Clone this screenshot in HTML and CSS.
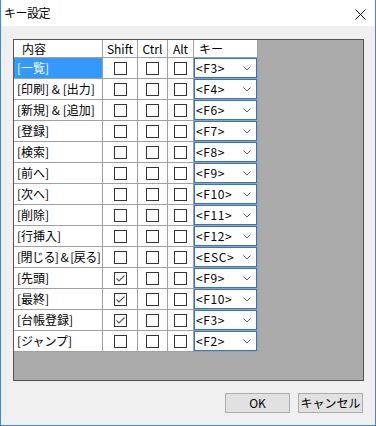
FILE: index.html
```html
<!DOCTYPE html>
<html lang="ja">
<head>
<meta charset="utf-8">
<title>キー設定</title>
<link rel="stylesheet" href="styles.css">
</head>
<body>
<div class="window">
  <div class="titlebar">
    <span class="title">キー設定</span>
    <svg class="close" width="11" height="11" viewBox="0 0 11 11"><path d="M0.5 0.5 L10.5 10.5 M10.5 0.5 L0.5 10.5" stroke="#111" stroke-width="1" fill="none"/></svg>
  </div>
  <div class="content">
    <div class="gridbox">
      <div class="table">
        <div class="cell head name-head">内容</div>
        <div class="cell head center">Shift</div>
        <div class="cell head center">Ctrl</div>
        <div class="cell head center">Alt</div>
        <div class="cell head key-head">キー</div>

        <div class="cell name selected">[一覧]</div>
        <div class="cell cb"><span class="box"></span></div>
        <div class="cell cb"><span class="box"></span></div>
        <div class="cell cb"><span class="box"></span></div>
        <div class="cell key"><div class="combo"><span>&lt;F3&gt;</span><svg class="chev" width="8" height="5" viewBox="0 0 8 5"><path d="M0.5 0.5 L4 4 L7.5 0.5" stroke="#666" fill="none"/></svg></div></div>

        <div class="cell name">[印刷] &amp; [出力]</div>
        <div class="cell cb"><span class="box"></span></div>
        <div class="cell cb"><span class="box"></span></div>
        <div class="cell cb"><span class="box"></span></div>
        <div class="cell key"><div class="combo"><span>&lt;F4&gt;</span><svg class="chev" width="8" height="5" viewBox="0 0 8 5"><path d="M0.5 0.5 L4 4 L7.5 0.5" stroke="#666" fill="none"/></svg></div></div>

        <div class="cell name">[新規] &amp; [追加]</div>
        <div class="cell cb"><span class="box"></span></div>
        <div class="cell cb"><span class="box"></span></div>
        <div class="cell cb"><span class="box"></span></div>
        <div class="cell key"><div class="combo"><span>&lt;F6&gt;</span><svg class="chev" width="8" height="5" viewBox="0 0 8 5"><path d="M0.5 0.5 L4 4 L7.5 0.5" stroke="#666" fill="none"/></svg></div></div>

        <div class="cell name">[登録]</div>
        <div class="cell cb"><span class="box"></span></div>
        <div class="cell cb"><span class="box"></span></div>
        <div class="cell cb"><span class="box"></span></div>
        <div class="cell key"><div class="combo"><span>&lt;F7&gt;</span><svg class="chev" width="8" height="5" viewBox="0 0 8 5"><path d="M0.5 0.5 L4 4 L7.5 0.5" stroke="#666" fill="none"/></svg></div></div>

        <div class="cell name">[検索]</div>
        <div class="cell cb"><span class="box"></span></div>
        <div class="cell cb"><span class="box"></span></div>
        <div class="cell cb"><span class="box"></span></div>
        <div class="cell key"><div class="combo"><span>&lt;F8&gt;</span><svg class="chev" width="8" height="5" viewBox="0 0 8 5"><path d="M0.5 0.5 L4 4 L7.5 0.5" stroke="#666" fill="none"/></svg></div></div>

        <div class="cell name">[前へ]</div>
        <div class="cell cb"><span class="box"></span></div>
        <div class="cell cb"><span class="box"></span></div>
        <div class="cell cb"><span class="box"></span></div>
        <div class="cell key"><div class="combo"><span>&lt;F9&gt;</span><svg class="chev" width="8" height="5" viewBox="0 0 8 5"><path d="M0.5 0.5 L4 4 L7.5 0.5" stroke="#666" fill="none"/></svg></div></div>

        <div class="cell name">[次へ]</div>
        <div class="cell cb"><span class="box"></span></div>
        <div class="cell cb"><span class="box"></span></div>
        <div class="cell cb"><span class="box"></span></div>
        <div class="cell key"><div class="combo"><span>&lt;F10&gt;</span><svg class="chev" width="8" height="5" viewBox="0 0 8 5"><path d="M0.5 0.5 L4 4 L7.5 0.5" stroke="#666" fill="none"/></svg></div></div>

        <div class="cell name">[削除]</div>
        <div class="cell cb"><span class="box"></span></div>
        <div class="cell cb"><span class="box"></span></div>
        <div class="cell cb"><span class="box"></span></div>
        <div class="cell key"><div class="combo"><span>&lt;F11&gt;</span><svg class="chev" width="8" height="5" viewBox="0 0 8 5"><path d="M0.5 0.5 L4 4 L7.5 0.5" stroke="#666" fill="none"/></svg></div></div>

        <div class="cell name">[行挿入]</div>
        <div class="cell cb"><span class="box"></span></div>
        <div class="cell cb"><span class="box"></span></div>
        <div class="cell cb"><span class="box"></span></div>
        <div class="cell key"><div class="combo"><span>&lt;F12&gt;</span><svg class="chev" width="8" height="5" viewBox="0 0 8 5"><path d="M0.5 0.5 L4 4 L7.5 0.5" stroke="#666" fill="none"/></svg></div></div>

        <div class="cell name tight">[閉じる] &amp; [戻る]</div>
        <div class="cell cb"><span class="box"></span></div>
        <div class="cell cb"><span class="box"></span></div>
        <div class="cell cb"><span class="box"></span></div>
        <div class="cell key"><div class="combo"><span>&lt;ESC&gt;</span><svg class="chev" width="8" height="5" viewBox="0 0 8 5"><path d="M0.5 0.5 L4 4 L7.5 0.5" stroke="#666" fill="none"/></svg></div></div>

        <div class="cell name">[先頭]</div>
        <div class="cell cb"><span class="box"><svg width="11" height="11" viewBox="0 0 11 11"><path d="M1.5 5.5 L4 8 L9.5 2.5" stroke="#555" stroke-width="1.1" fill="none"/></svg></span></div>
        <div class="cell cb"><span class="box"></span></div>
        <div class="cell cb"><span class="box"></span></div>
        <div class="cell key"><div class="combo"><span>&lt;F9&gt;</span><svg class="chev" width="8" height="5" viewBox="0 0 8 5"><path d="M0.5 0.5 L4 4 L7.5 0.5" stroke="#666" fill="none"/></svg></div></div>

        <div class="cell name">[最終]</div>
        <div class="cell cb"><span class="box"><svg width="11" height="11" viewBox="0 0 11 11"><path d="M1.5 5.5 L4 8 L9.5 2.5" stroke="#555" stroke-width="1.1" fill="none"/></svg></span></div>
        <div class="cell cb"><span class="box"></span></div>
        <div class="cell cb"><span class="box"></span></div>
        <div class="cell key"><div class="combo"><span>&lt;F10&gt;</span><svg class="chev" width="8" height="5" viewBox="0 0 8 5"><path d="M0.5 0.5 L4 4 L7.5 0.5" stroke="#666" fill="none"/></svg></div></div>

        <div class="cell name">[台帳登録]</div>
        <div class="cell cb"><span class="box"><svg width="11" height="11" viewBox="0 0 11 11"><path d="M1.5 5.5 L4 8 L9.5 2.5" stroke="#555" stroke-width="1.1" fill="none"/></svg></span></div>
        <div class="cell cb"><span class="box"></span></div>
        <div class="cell cb"><span class="box"></span></div>
        <div class="cell key"><div class="combo"><span>&lt;F3&gt;</span><svg class="chev" width="8" height="5" viewBox="0 0 8 5"><path d="M0.5 0.5 L4 4 L7.5 0.5" stroke="#666" fill="none"/></svg></div></div>

        <div class="cell name">[ジャンプ]</div>
        <div class="cell cb"><span class="box"></span></div>
        <div class="cell cb"><span class="box"></span></div>
        <div class="cell cb"><span class="box"></span></div>
        <div class="cell key"><div class="combo"><span>&lt;F2&gt;</span><svg class="chev" width="8" height="5" viewBox="0 0 8 5"><path d="M0.5 0.5 L4 4 L7.5 0.5" stroke="#666" fill="none"/></svg></div></div>
      </div>
    </div>
    <div class="buttons">
      <div class="btn">OK</div>
      <div class="btn">キャンセル</div>
    </div>
  </div>
</div>
</body>
</html>
```

FILE: styles.css
```css
html, body {
  margin: 0;
  padding: 0;
}
body {
  width: 376px;
  height: 426px;
  overflow: hidden;
  font-family: "Noto Sans CJK JP", "Noto Sans", sans-serif;
  font-size: 12px;
  color: #000;
}
.window {
  box-sizing: border-box;
  width: 376px;
  height: 426px;
  border: 1px solid #3b8ad9;
  border-top: none;
  background: #f0f0f0;
  display: flex;
  flex-direction: column;
}
.titlebar {
  height: 26px;
  background: #fff;
  display: flex;
  align-items: center;
  justify-content: space-between;
  padding: 0 9px 0 3px;
  flex: none;
}
.title {
  font-size: 12px;
  line-height: 14px;
  letter-spacing: -0.5px;
}
.close {
  display: block;
  margin-top: 2px;
}
.content {
  padding: 13px 11px 0 12px;
  display: flex;
  flex-direction: column;
}
.gridbox {
  box-sizing: border-box;
  width: 351px;
  height: 342px;
  border: 1px solid #555;
  background: #ababab;
}
.table {
  display: grid;
  grid-template-columns: 89px 35px 30px 26px 64px;
  grid-template-rows: 18px;
  grid-auto-rows: 21px;
  width: 244px;
}
.cell {
  box-sizing: border-box;
  border-right: 1px solid #a0a0a0;
  border-bottom: 1px solid #a0a0a0;
  background: #fff;
  display: flex;
  align-items: center;
  line-height: 14px;
  white-space: pre;
  overflow: hidden;
}
.head {
  padding-top: 1px;
}
.name-head {
  padding-left: 8px;
}
.center {
  justify-content: center;
}
.key-head {
  padding-left: 5px;
}
.name {
  padding-left: 3px;
}
.tight {
  letter-spacing: -0.55px;
}
.selected {
  background: #3399ff;
  color: #fff;
}
.cb {
  justify-content: center;
}
.box {
  box-sizing: border-box;
  width: 13px;
  height: 13px;
  border: 1px solid #333;
  background: #fff;
  display: flex;
  align-items: center;
  justify-content: center;
}
.box svg {
  display: block;
}
.key {
  padding: 0;
  align-items: stretch;
}
.combo {
  box-sizing: border-box;
  flex: 1;
  border: 1px solid #2f78c6;
  background: #fff;
  display: flex;
  align-items: center;
  justify-content: space-between;
  padding: 0 5px 0 1px;
  letter-spacing: 0.6px;
}
.chev {
  display: block;
  margin-top: 1px;
}
.buttons {
  display: flex;
  justify-content: flex-end;
  gap: 8px;
  margin-top: 12px;
  padding-right: 1px;
}
.btn {
  box-sizing: border-box;
  width: 65px;
  height: 20px;
  background: #e1e1e1;
  border: 1px solid #adadad;
  display: flex;
  align-items: center;
  justify-content: center;
  line-height: 14px;
}
```
